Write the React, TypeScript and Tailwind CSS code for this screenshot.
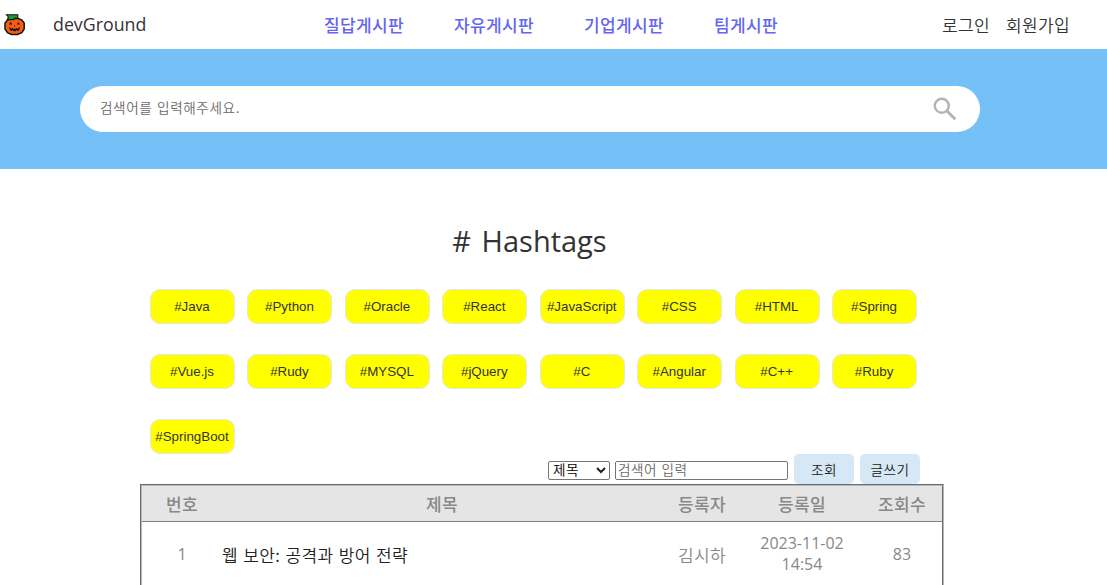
import React from "react";

const tags = [
  "#Java", "#Python", "#Oracle", "#React", "#JavaScript", "#CSS", "#HTML", "#Spring",
  "#Vue.js", "#Rudy", "#MYSQL", "#jQuery", "#C", "#Angular", "#C++", "#Ruby",
  "#SpringBoot",
];

const boards = ["질답게시판", "자유게시판", "기업게시판", "팀게시판"];

const columns = "grid grid-cols-[80px_440px_80px_120px_80px] items-center text-center";

function Pumpkin() {
  return (
    <svg width="22" height="22" viewBox="0 0 22 22" className="mt-px shrink-0">
      <path d="M6.5 4.5 3.5 6 1 9v6l2.5 3.6 4 1.8h6l4.3-1.8 2.4-3.6V9l-2.3-3-3.5-1.5z" fill="#f85c0c" stroke="#151515" strokeWidth="1.5" />
      <path d="M2.5 0.7h11.3v3.4l-3 .3-1.2 1.2H3.3L4.4 3z" fill="#189a2c" stroke="#151515" strokeWidth="1.1" />
      <path d="M5 10.6 6.6 7.8 8.2 10.6zM12.8 10.6l1.6-2.8 1.6 2.8zM9.8 12.4l.8-1.5.8 1.5z" fill="#151515" />
      <path d="m5 12.6 2.2 2.2 1.2-1 1 1.4 1.2-1 1.2 1 1-1.4 1.2 1 2.2-2.2-1 3.6-1.6.9-1.2-1.1-1 1.2H9.8l-1-1.2-1.2 1.1-1.6-.9z" fill="#151515" />
    </svg>
  );
}

export default function App() {
  return (
    <div className="h-[585px] overflow-hidden bg-white font-['Open_Sans','Noto_Sans_CJK_KR',sans-serif] text-[#333]">
      <header className="flex h-[49px] items-center whitespace-nowrap pl-1">
        <Pumpkin />
        <a className="ml-[27px] w-[271px] pb-0.5 text-[17.8px] leading-6">devGround</a>
        <nav className="flex gap-[50px] font-['Noto_Sans_CJK_KR',sans-serif] text-[17px] font-medium leading-6 tracking-[0.36px] text-[#6366f1]">
          {boards.map((b) => <a key={b}>{b}</a>)}
        </nav>
        <div className="ml-auto mr-[37px] flex gap-4 font-['Noto_Sans_CJK_KR',sans-serif] text-[17px] font-[350] leading-6 tracking-[0.36px]">
          <a>로그인</a>
          <a>회원가입</a>
        </div>
      </header>

      <section className="h-[120px] bg-[#74c0f7] pl-20 pt-[37px]">
        <div className="flex h-[46px] w-[900px] items-center rounded-full bg-white pl-5 pr-[23px]">
          <input
            placeholder="검색어를 입력해주세요."
            className="min-w-0 flex-1 pb-[3px] font-['Noto_Sans_CJK_KR',sans-serif] text-[13.6px] font-[350] tracking-[0.6px] [word-spacing:1px] outline-none placeholder:text-[#6b6b6b]"
          />
          <svg width="24" height="24" viewBox="0 0 24 24" fill="none" stroke="#b3b3b3" strokeWidth="2.4">
            <circle cx="8.8" cy="8.8" r="7" />
            <path d="m14 14 8.3 8.3" strokeWidth="3" />
          </svg>
        </div>
      </section>

      <main className="w-[1060px]">
        <h1 className="pr-px pt-[50px] text-center text-[29px] font-normal leading-[44px] [word-spacing:3px]"># Hashtags</h1>
        <div className="ml-[150px] mt-[26px] grid grid-cols-[repeat(8,85px)] gap-x-[12.45px] gap-y-[30px]">
          {tags.map((t) => (
            <button
              key={t}
              className="h-[35px] whitespace-nowrap rounded-[10px] border border-[#e5e5e5] bg-[yellow] pr-px font-['Liberation_Sans',sans-serif] text-[13.33px]"
            >
              {t}
            </button>
          ))}
        </div>

        <form className="ml-[548px] flex h-[30px] items-center font-['Noto_Sans_CJK_KR',sans-serif] text-[13.6px] font-[350] tracking-[0.5px]">
          <div className="mt-0.5 flex h-[19px] w-[62px] items-center justify-between rounded-[2px] border border-[#767676] pl-1 pr-[3px] text-black">
            <span className="leading-none">제목</span>
            <svg width="10" height="7" viewBox="0 0 10 7" fill="none" stroke="#222" strokeWidth="2">
              <path d="m1 1 4 4 4-4" />
            </svg>
          </div>
          <input
            placeholder="검색어 입력"
            className="ml-[5px] mt-0.5 h-[19px] w-[173px] rounded-[2px] border border-[#767676] px-0.5 pb-0.5 [word-spacing:1px] placeholder:text-[#6b6b6b]"
          />
          <button type="button" className="ml-1.5 h-[30px] w-[60px] rounded-[5px] bg-[#d6e8f5] text-[#222]">조회</button>
          <button type="button" className="ml-1.5 h-[30px] w-[60px] rounded-[5px] bg-[#d6e8f5] text-[#222]">글쓰기</button>
        </form>

        <div className="ml-[140px] h-[110px] w-[804px] border border-b-0 border-[#6b6b6b] border-r-[#b8b8b8]">
          <div className="h-full border border-b-0 border-[#b8b8b8] border-r-[#6b6b6b] text-[#888]">
            <div className={columns + " h-9 border-b border-[#808080] bg-[#e5e5e5] font-['Noto_Sans_CJK_KR',sans-serif] text-[17px] font-medium tracking-[0.36px]"}>
              <span>번호</span>
              <span>제목</span>
              <span>등록자</span>
              <span>등록일</span>
              <span>조회수</span>
            </div>
            <div className={columns + " h-[64px] text-[16px] leading-[21px]"}>
              <span>1</span>
              <span className="text-left font-['Noto_Sans_CJK_KR',sans-serif] text-[17px] font-[350] tracking-[0.36px] [word-spacing:1.1px] text-[#222]">웹 보안: 공격과 방어 전략</span>
              <span className="font-['Noto_Sans_CJK_KR',sans-serif] text-[17px] font-[350] tracking-[0.36px]">김시하</span>
              <span>2023-11-02<br />14:54</span>
              <span>83</span>
            </div>
          </div>
        </div>
      </main>
    </div>
  );
}
